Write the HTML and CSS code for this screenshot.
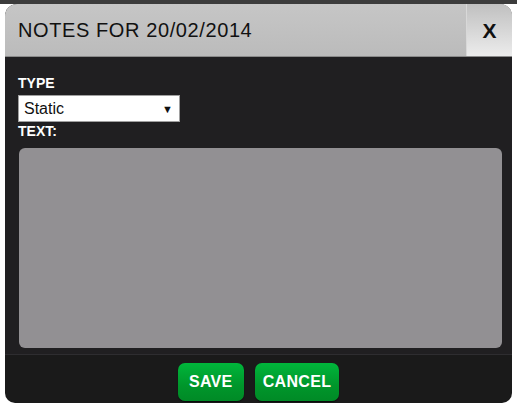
FILE: index.html
```html
<!DOCTYPE html>
<html lang="en">
<head>
    <meta charset="UTF-8">
    <title>Notes</title>
    <link rel="stylesheet" href="styles.css">
</head>
<body>
    <div class="backdrop"></div>
    <div class="dialog">
        <div class="header">
            <div class="title">NOTES FOR 20/02/2014</div>
            <button type="button" class="close">X</button>
        </div>
        <div class="content">
            <label class="field-label" for="type">TYPE</label>
            <div class="select">
                <span>Static</span>
                <span class="arrow">&#9660;</span>
            </div>
            <label class="field-label" for="text">TEXT:</label>
            <textarea id="text" class="notes"></textarea>
        </div>
        <div class="footer">
            <button type="button" class="btn">SAVE</button>
            <button type="button" class="btn">CANCEL</button>
        </div>
    </div>
</body>
</html>
```

FILE: styles.css
```css
* {
    box-sizing: border-box;
    margin: 0;
    padding: 0;
    font-family: 'Liberation Sans', Arial, sans-serif;
}
body {
    background: #ffffff;
    width: 517px;
    height: 408px;
    overflow: hidden;
}
.backdrop {
    height: 4px;
    background: #3c3c3c;
}
.dialog {
    margin: 0 5px 0 5px;
    height: 399px;
    display: flex;
    flex-direction: column;
    background: #1a1a1a;
    border-radius: 12px 12px 10px 10px;
    overflow: hidden;
}
.header {
    height: 53px;
    display: flex;
    align-items: stretch;
    background: linear-gradient(#c6c6c6, #bbbbbb);
    border-bottom: 1px solid #8a8a8a;
}
.title {
    flex: 1;
    padding-left: 13px;
    display: flex;
    align-items: center;
    font-size: 20px;
    color: #111111;
    letter-spacing: 0.6px;
}
.close {
    width: 46px;
    border: none;
    border-left: 1px solid #d8d8d8;
    background: linear-gradient(#c0c0c0, #ececec);
    font-size: 21px;
    font-weight: bold;
    color: #111111;
    padding-top: 2px;
}
.content {
    background: #201f21;
    padding: 18px 10px 6px 13px;
    height: 298px;
    display: flex;
    flex-direction: column;
    border-bottom: 1px solid #2e2d30;
}
.field-label {
    color: #ffffff;
    font-weight: bold;
    font-size: 14px;
    line-height: 16px;
}
.select {
    width: 162px;
    height: 27px;
    margin: 4px 0 1px 0;
    background: #ffffff;
    border: 1px solid #a0a0a0;
    display: flex;
    align-items: center;
    justify-content: space-between;
    padding: 0 6px 0 5px;
    font-size: 16px;
    color: #111111;
}
.arrow {
    font-size: 11px;
}
.notes {
    margin-top: 9px;
    flex: 1;
    margin-left: 1px;
    background: #929093;
    border: none;
    border-radius: 6px;
    resize: none;
}
.footer {
    flex: 1;
    display: flex;
    justify-content: center;
    align-items: flex-start;
    gap: 11px;
    padding-top: 8px;
}
.btn {
    height: 38px;
    min-width: 66px;
    padding: 0 8px;
    border: none;
    border-radius: 7px;
    background: linear-gradient(#00b63b, #00962b 60%, #008a26);
    color: #ffffff;
    font-weight: bold;
    font-size: 16px;
    letter-spacing: 0.3px;
    box-shadow: 0 1px 1px rgba(0, 0, 0, 0.6);
}
```
